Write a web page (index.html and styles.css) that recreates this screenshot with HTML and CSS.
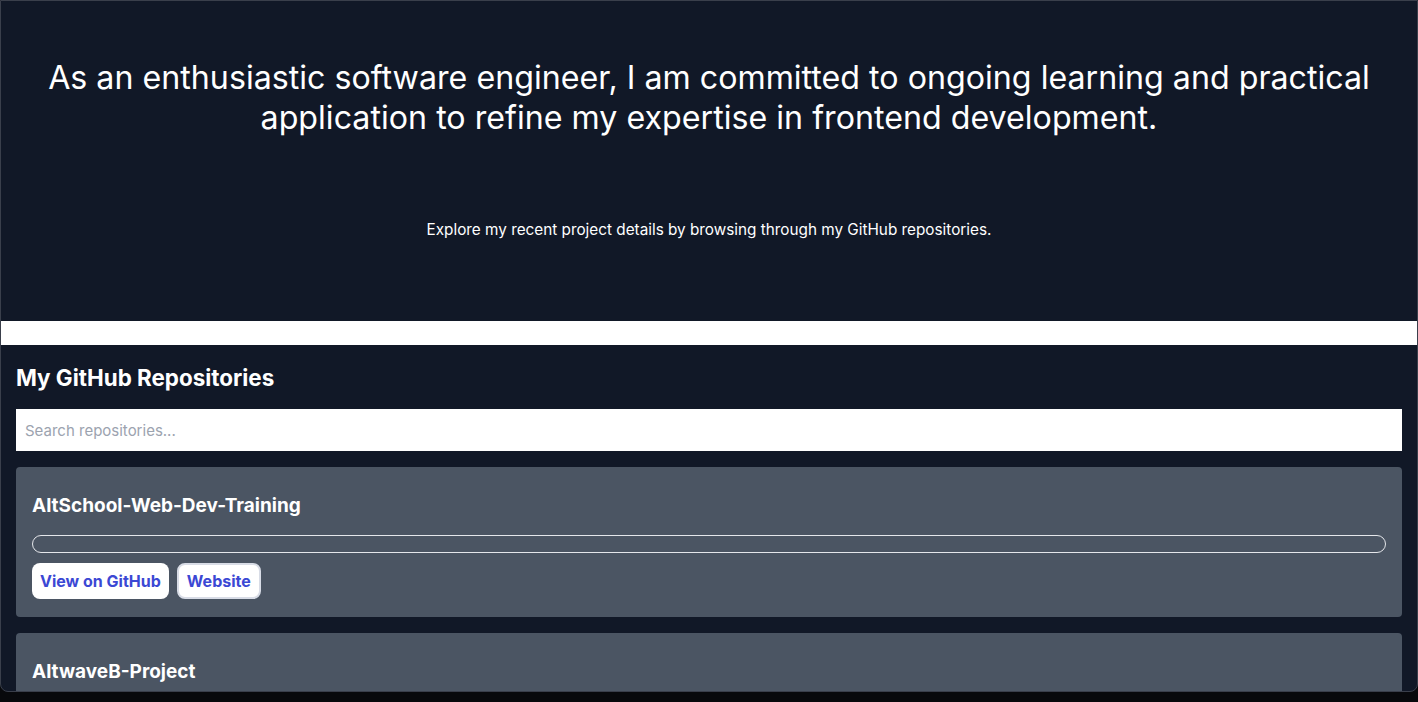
FILE: index.html
```html
<!DOCTYPE html>
<html lang="en">
<head>
<meta charset="utf-8">
<title>Portfolio</title>
<link rel="stylesheet" href="styles.css">
</head>
<body>
<div class="window">
  <div class="scroller">
    <header class="hero">
      <h1 class="hero-title">As an enthusiastic software engineer, I am committed to ongoing learning and practical application to refine my expertise in frontend development.</h1>
      <p class="hero-sub">Explore my recent project details by browsing through my GitHub repositories.</p>
    </header>
    <div class="spacer"></div>
    <section class="repos">
      <h2 class="repos-title">My GitHub Repositories</h2>
      <input class="search" type="text" placeholder="Search repositories...">
      <div class="card">
        <h3 class="card-title">AltSchool-Web-Dev-Training</h3>
        <div class="bar"></div>
        <div class="actions">
          <a class="btn" href="#">View on GitHub</a>
          <a class="btn btn-bordered" href="#">Website</a>
        </div>
      </div>
      <div class="card">
        <h3 class="card-title">AltwaveB-Project</h3>
        <div class="bar"></div>
        <div class="actions">
          <a class="btn" href="#">View on GitHub</a>
        </div>
      </div>
    </section>
  </div>
</div>
</body>
</html>
```

FILE: styles.css
```css
* { box-sizing: border-box; }
html, body { margin: 0; padding: 0; }
body {
  background: #08090c;
  font-family: Inter, "Noto Sans", sans-serif;
  height: 702px;
  overflow: hidden;
}
.window {
  height: 692px;
  border: 1px solid #3a3f4b;
  border-radius: 0 0 8px 8px;
  overflow: hidden;
  background: #111827;
}
.scroller { height: 100%; overflow: hidden; }
.hero {
  background: #111827;
  height: 320px;
  padding-top: 57px;
  text-align: center;
  color: #fff;
}
.hero-title {
  margin: 0 auto;
  font-size: 32.2px;
  line-height: 40px;
  font-weight: 400;
  max-width: 1380px;
}
.hero-sub {
  margin: 82px 0 0;
  font-size: 15.3px;
  line-height: 20px;
}
.spacer { height: 24px; background: #fff; }
.repos {
  padding: 16px 15px 0 15px;
  color: #fff;
}
.repos-title {
  margin: 3px 0 17px;
  font-size: 22.4px;
  line-height: 28px;
  font-weight: 700;
}
.search {
  display: block;
  width: 100%;
  height: 42px;
  border: none;
  padding: 0 9px;
  font-family: inherit;
  font-size: 15px;
  color: #111;
  background: #fff;
  outline: none;
  margin-bottom: 16px;
}
.search::placeholder { color: #9ca3af; }
.card {
  background: #4b5563;
  border-radius: 4px;
  padding: 27px 16px 18px;
  margin-bottom: 16px;
}
.card-title {
  margin: 0 0 17px;
  font-size: 19px;
  line-height: 24px;
  font-weight: 700;
}
.bar {
  height: 18px;
  border: 1px solid #e5e7eb;
  border-radius: 9px;
  margin-bottom: 10px;
}
.actions { display: flex; gap: 8px; }
.btn {
  display: inline-flex;
  align-items: center;
  height: 36px;
  padding: 0 8px;
  background: #fff;
  color: #3b48d4;
  font-weight: 700;
  font-size: 16px;
  text-decoration: none;
  border-radius: 8px;
}
.btn-bordered {
  border: 2px solid #d8dce6;
  padding: 0 8px;
}
```
